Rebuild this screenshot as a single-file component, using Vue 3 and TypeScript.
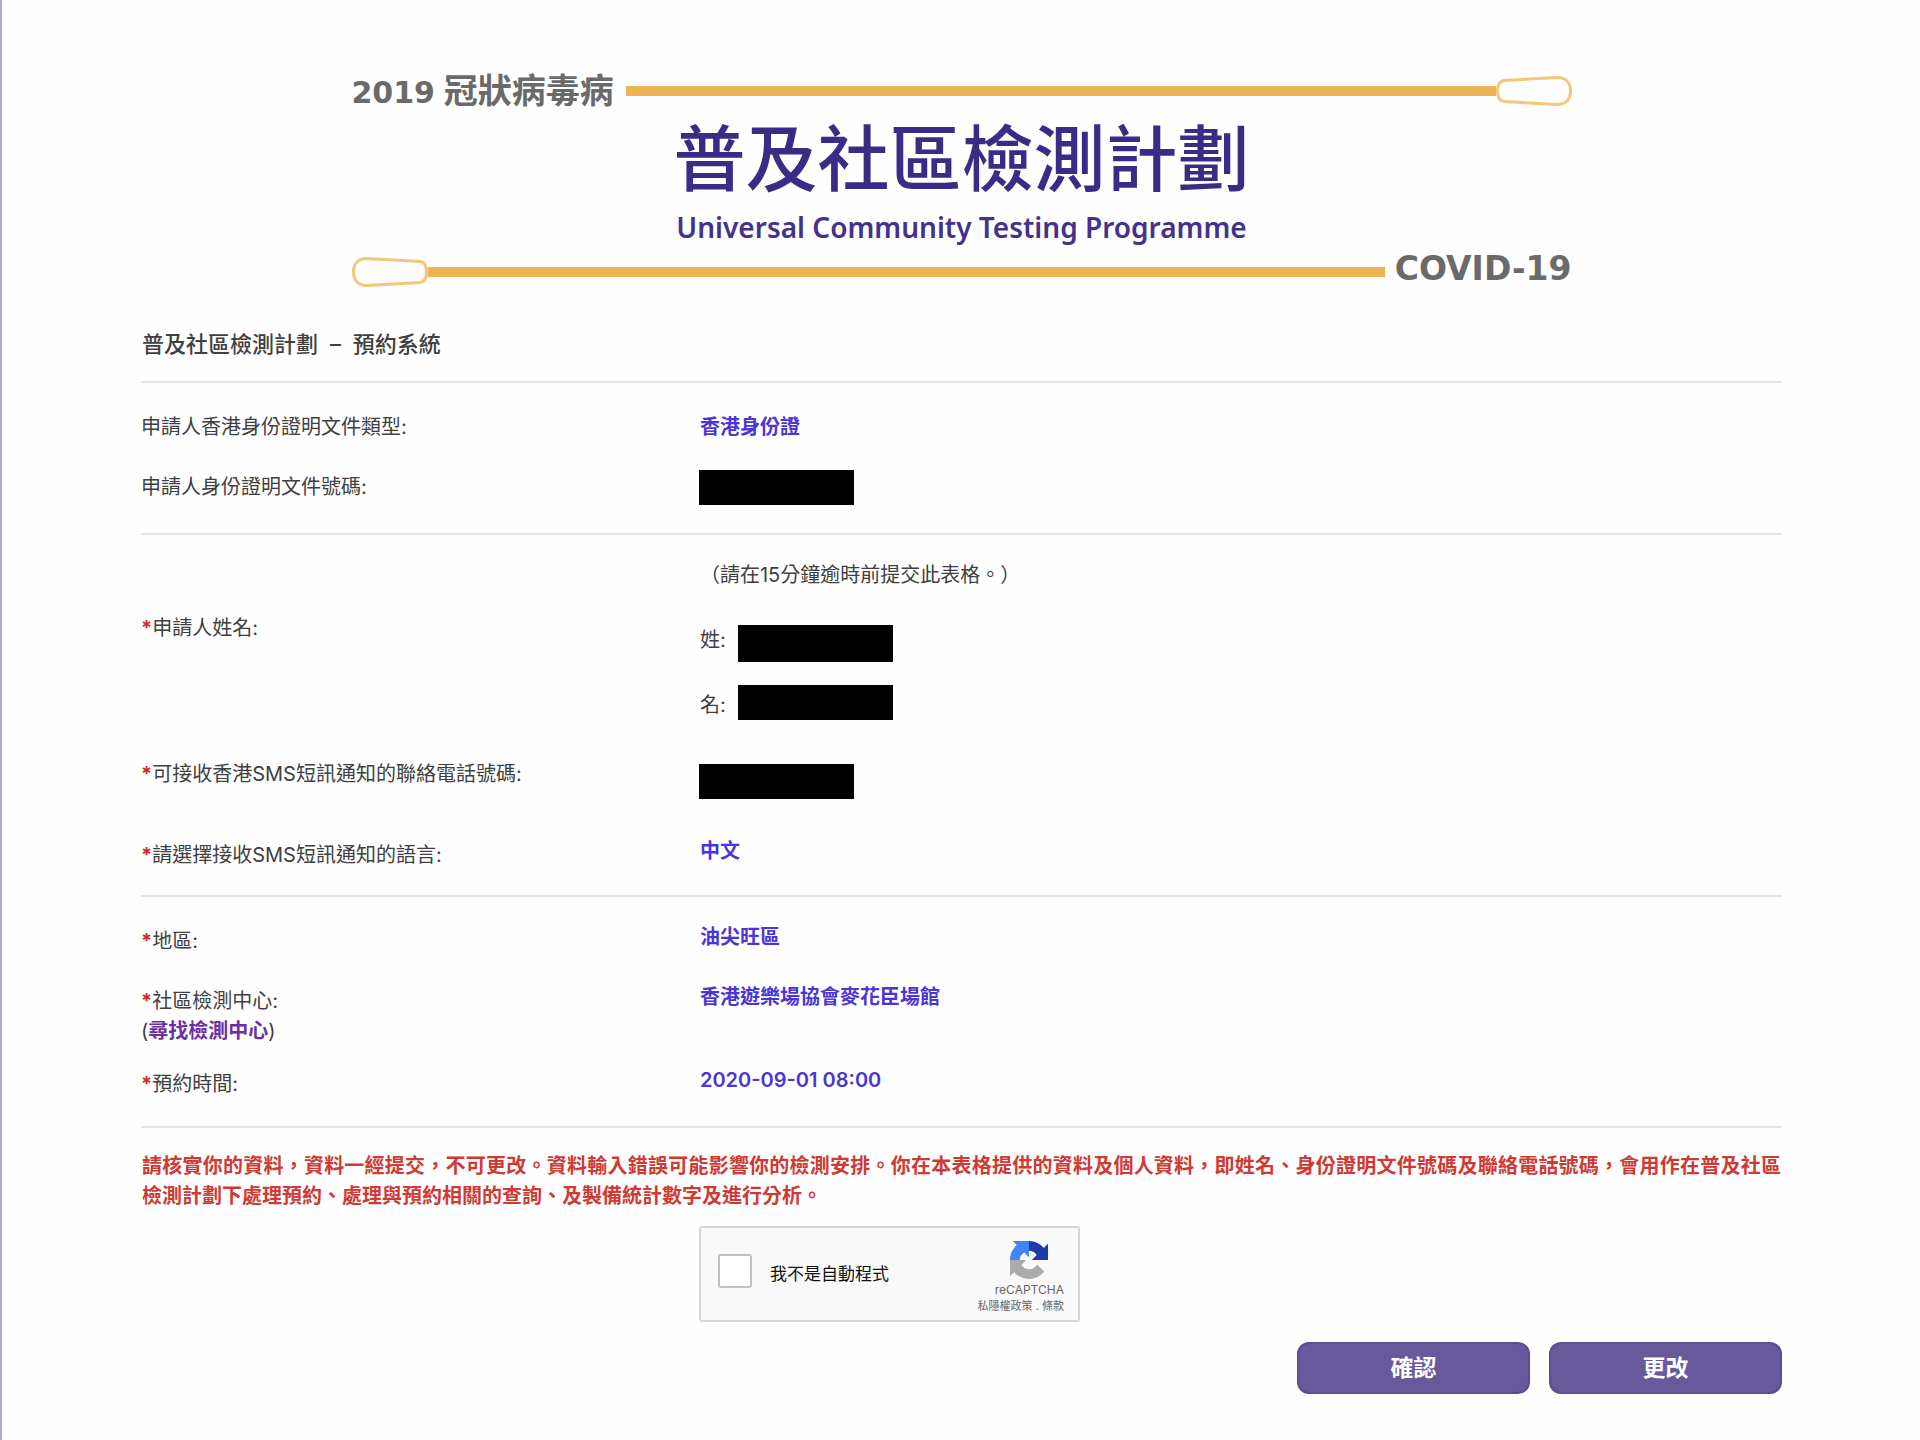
<script setup lang="ts">
import { ref } from 'vue'

const notRobot = ref(false)
</script>

<template>
  <main class="page">
    <header class="banner">
      <div class="swab">
        <span class="swab-text"><span class="swab-latin">2019</span> 冠狀病毒病</span>
        <span class="stick"></span>
        <svg class="bud" viewBox="0 0 76 30" aria-hidden="true">
          <path d="M8 4.5 L61 1.5 C70 1.5 74.500 7 74.500 15 C74.500 23 70 28.500 61 28.500 L8 25.500 C3 25 1.500 21 1.500 15 C1.500 9 3 5 8 4.500 Z" />
        </svg>
      </div>
      <h1 class="banner-title">普及社區檢測計劃</h1>
      <p class="banner-sub">Universal Community Testing Programme</p>
      <div class="swab">
        <svg class="bud" viewBox="0 0 76 30" aria-hidden="true">
          <path d="M68 4.500 L15 1.500 C6 1.500 1.500 7 1.500 15 C1.500 23 6 28.500 15 28.500 L68 25.500 C73 25 74.500 21 74.500 15 C74.500 9 73 5 68 4.500 Z" />
        </svg>
        <span class="stick"></span>
        <span class="swab-text swab-covid">COVID-19</span>
      </div>
    </header>

    <h2 class="heading">普及社區檢測計劃 <span class="dash">–</span> 預約系統</h2>

    <form class="form" @submit.prevent>
      <section class="section identity">
        <div class="row centred">
          <span class="label">申請人香港身份證明文件類型:</span>
          <span class="value">香港身份證</span>
        </div>
        <div class="row centred">
          <span class="label">申請人身份證明文件號碼:</span>
          <span class="redacted"></span>
        </div>
      </section>

      <section class="section applicant">
        <div class="row">
          <p class="note">（請在15分鐘逾時前提交此表格。）</p>
        </div>
        <div class="row name-row">
          <span class="label"><b class="star">*</b>申請人姓名:</span>
          <div class="names">
            <div class="name surname">
              <span class="name-label">姓:</span>
              <span class="redacted"></span>
            </div>
            <div class="name given">
              <span class="name-label">名:</span>
              <span class="redacted"></span>
            </div>
          </div>
        </div>
        <div class="row phone-row">
          <span class="label"><b class="star">*</b>可接收香港SMS短訊通知的聯絡電話號碼:</span>
          <span class="redacted"></span>
        </div>
        <div class="row required">
          <span class="label"><b class="star">*</b>請選擇接收SMS短訊通知的語言:</span>
          <span class="value">中文</span>
        </div>
      </section>

      <section class="section booking">
        <div class="row required">
          <span class="label"><b class="star">*</b>地區:</span>
          <span class="value">油尖旺區</span>
        </div>
        <div class="row required">
          <span class="label">
            <b class="star">*</b>社區檢測中心:<br />(<a class="find" href="#">尋找檢測中心</a>)
          </span>
          <span class="value">香港遊樂場協會麥花臣場館</span>
        </div>
        <div class="row required">
          <span class="label"><b class="star">*</b>預約時間:</span>
          <span class="value">2020-09-01 08:00</span>
        </div>
      </section>

      <p class="warning">請核實你的資料，資料一經提交，不可更改。資料輸入錯誤可能影響你的檢測安排。你在本表格提供的資料及個人資料，即姓名、身份證明文件號碼及聯絡電話號碼，會用作在普及社區檢測計劃下處理預約、處理與預約相關的查詢、及製備統計數字及進行分析。</p>

      <div class="captcha">
        <input id="not-robot" v-model="notRobot" class="captcha-box" type="checkbox" />
        <label class="captcha-label" for="not-robot">我不是自動程式</label>
        <div class="captcha-brand">
          <svg class="captcha-logo" viewBox="0 0 64 64" aria-hidden="true">
            <path fill="#1c3aa9" d="M64 31.955l-.033-1.370V4.687l-7.160 7.160C50.948 4.674 42.033.093 32.050.093c-10.400 0-19.622 4.960-25.458 12.640l11.736 11.860a15.550 15.550 0 0 1 4.754-5.334c2.050-1.600 4.952-2.906 8.968-2.906.485 0 .860.057 1.135.163 4.976.393 9.288 3.140 11.828 7.124l-8.307 8.307L64 31.953" />
            <path fill="#4285f4" d="M31.862.094l-1.370.033H4.594l7.160 7.160C4.580 13.147 0 22.060 0 32.046c0 10.400 4.960 19.622 12.640 25.458L24.500 45.768a15.550 15.550 0 0 1-5.334-4.754c-1.600-2.050-2.906-4.952-2.906-8.968 0-.485.057-.860.163-1.135.393-4.976 3.140-9.288 7.124-11.828l8.307 8.307L31.860.095" />
            <path fill="#ababab" d="M.001 32.045l.033 1.370v25.898l7.160-7.160c5.860 7.173 14.774 11.754 24.760 11.754 10.400 0 19.622-4.960 25.458-12.640l-11.736-11.860a15.550 15.550 0 0 1-4.754 5.334c-2.050 1.600-4.952 2.906-8.968 2.906-.485 0-.860-.057-1.135-.163-4.976-.393-9.288-3.140-11.828-7.124l8.307-8.307c-10.522.040-22.400.066-27.295-.005" />
          </svg>
          <span class="captcha-name">reCAPTCHA</span>
          <span class="captcha-links"><a href="#">私隱權政策</a> . <a href="#">條款</a></span>
        </div>
      </div>

      <div class="actions">
        <button class="action" type="submit">確認</button>
        <button class="action" type="button">更改</button>
      </div>
    </form>
  </main>
</template>

<style>
body {
  margin: 0;
  background: #fefefe;
}
</style>

<style scoped>
.page {
  box-sizing: border-box;
  min-height: 100vh;
  padding: 73px 138px 46px 139px;
  border-left: 2px solid #a9adbb;
  font-family: Inter, "Noto Sans CJK TC", sans-serif;
  font-size: 20px;
  line-height: 30px;
  color: #404040;
}

.banner {
  max-width: 1220px;
  margin: 0 auto;
  font-family: "Noto Sans", "Noto Sans CJK TC", sans-serif;
  text-align: center;
}

.swab {
  display: flex;
  align-items: center;
  height: 36px;
}

.swab-text {
  margin-right: 12px;
  font-size: 34px;
  line-height: 36px;
  font-weight: 700;
  color: #6a6a6a;
}

.swab-latin,
.swab-covid {
  font-family: "DejaVu Sans", sans-serif;
}

.swab-latin {
  font-size: 30px;
}

.swab-covid {
  margin: 0 0 6px 10px;
  font-size: 33px;
}

.stick {
  flex: 1;
  height: 10px;
  background: #edb453;
}

.bud {
  width: 76px;
  height: 30px;
  fill: none;
  stroke: #f3c67c;
  stroke-width: 3;
}

.banner-title {
  margin: 4px 0 0;
  font-size: 72px;
  line-height: 88px;
  font-weight: 500;
  color: #3b2a86;
}

.banner-sub {
  margin: 8px 0 9px;
  font-size: 28px;
  line-height: 36px;
  font-weight: 600;
  color: #43328c;
}

.heading {
  margin: 38px 0 21px;
  padding-left: 1px;
  font-size: 22px;
  line-height: 32px;
  font-weight: 500;
}

.dash {
  margin: 0 6px;
}

.section {
  border-top: 2px solid #e3e3e3;
}

.identity {
  padding: 14px 0 16px;
}

.applicant {
  padding: 25px 0;
}

.booking {
  padding: 25px 0 27px;
  border-bottom: 2px solid #e3e3e3;
}

.row {
  display: grid;
  grid-template-columns: 34% 1fr;
  align-items: start;
}

.centred {
  align-items: center;
  min-height: 60px;
}

.required .label {
  padding-top: 4px;
}

.booking .row + .row {
  margin-top: 19px;
}

.booking .row:nth-child(2) {
  margin-top: 26px;
}

.star {
  color: #d9262c;
}

.value {
  padding-left: 1px;
  font-weight: 600;
  color: #4a35d6;
}

.redacted {
  width: 155px;
  height: 35px;
  background: #000;
}

.note {
  grid-column: 2;
  margin: 0;
  padding-left: 1px;
}

.name-row {
  margin-top: 23px;
}

.names {
  display: grid;
  gap: 23px;
  padding-top: 12px;
}

.name {
  display: flex;
  align-items: flex-start;
}

.name-label {
  box-sizing: border-box;
  width: 39px;
  padding-left: 1px;
}

.surname .redacted {
  height: 37px;
}

.given {
  align-items: flex-end;
}

.phone-row {
  margin: 39px 0 37px;
}

.phone-row .redacted {
  margin-top: 5px;
}

.find {
  font-weight: 700;
  color: #6b2fa3;
  text-decoration: none;
}

.warning {
  margin: 23px 0 15px;
  padding: 0 1px;
  font-weight: 700;
  text-align: justify;
  color: #cf3a34;
}

.captcha {
  display: flex;
  align-items: center;
  box-sizing: border-box;
  width: 381px;
  height: 96px;
  margin-left: 34%;
  padding: 0 14px 0 17px;
  border: 2px solid #d6d6d6;
  border-radius: 3px;
  background: #f9f9f9;
}

.captcha-box {
  appearance: none;
  flex: none;
  box-sizing: border-box;
  width: 34px;
  height: 34px;
  margin: 0 18px 6px 0;
  border: 2px solid #c1c1c1;
  border-radius: 3px;
  background: #fff;
}

.captcha-box:checked {
  background: #4285f4;
}

.captcha-label {
  font-size: 17px;
  color: #111;
}

.captcha-brand {
  display: flex;
  flex-direction: column;
  align-items: flex-end;
  margin-left: auto;
  padding-top: 6px;
  font-size: 12px;
  line-height: 16px;
  color: #666;
}

.captcha-logo {
  width: 38px;
  height: 38px;
  margin: 0 16px 3px 0;
}

.captcha-links {
  font-size: 11px;
}

.captcha-links a {
  color: inherit;
  text-decoration: none;
}

.actions {
  display: flex;
  justify-content: flex-end;
  gap: 19px;
  margin-top: 20px;
}

.action {
  width: 233px;
  height: 52px;
  padding: 0;
  border: 2px solid #5b4c93;
  border-radius: 12px;
  background: #67599c;
  font-family: inherit;
  font-size: 23px;
  line-height: 32px;
  font-weight: 700;
  color: #fff;
}
</style>
